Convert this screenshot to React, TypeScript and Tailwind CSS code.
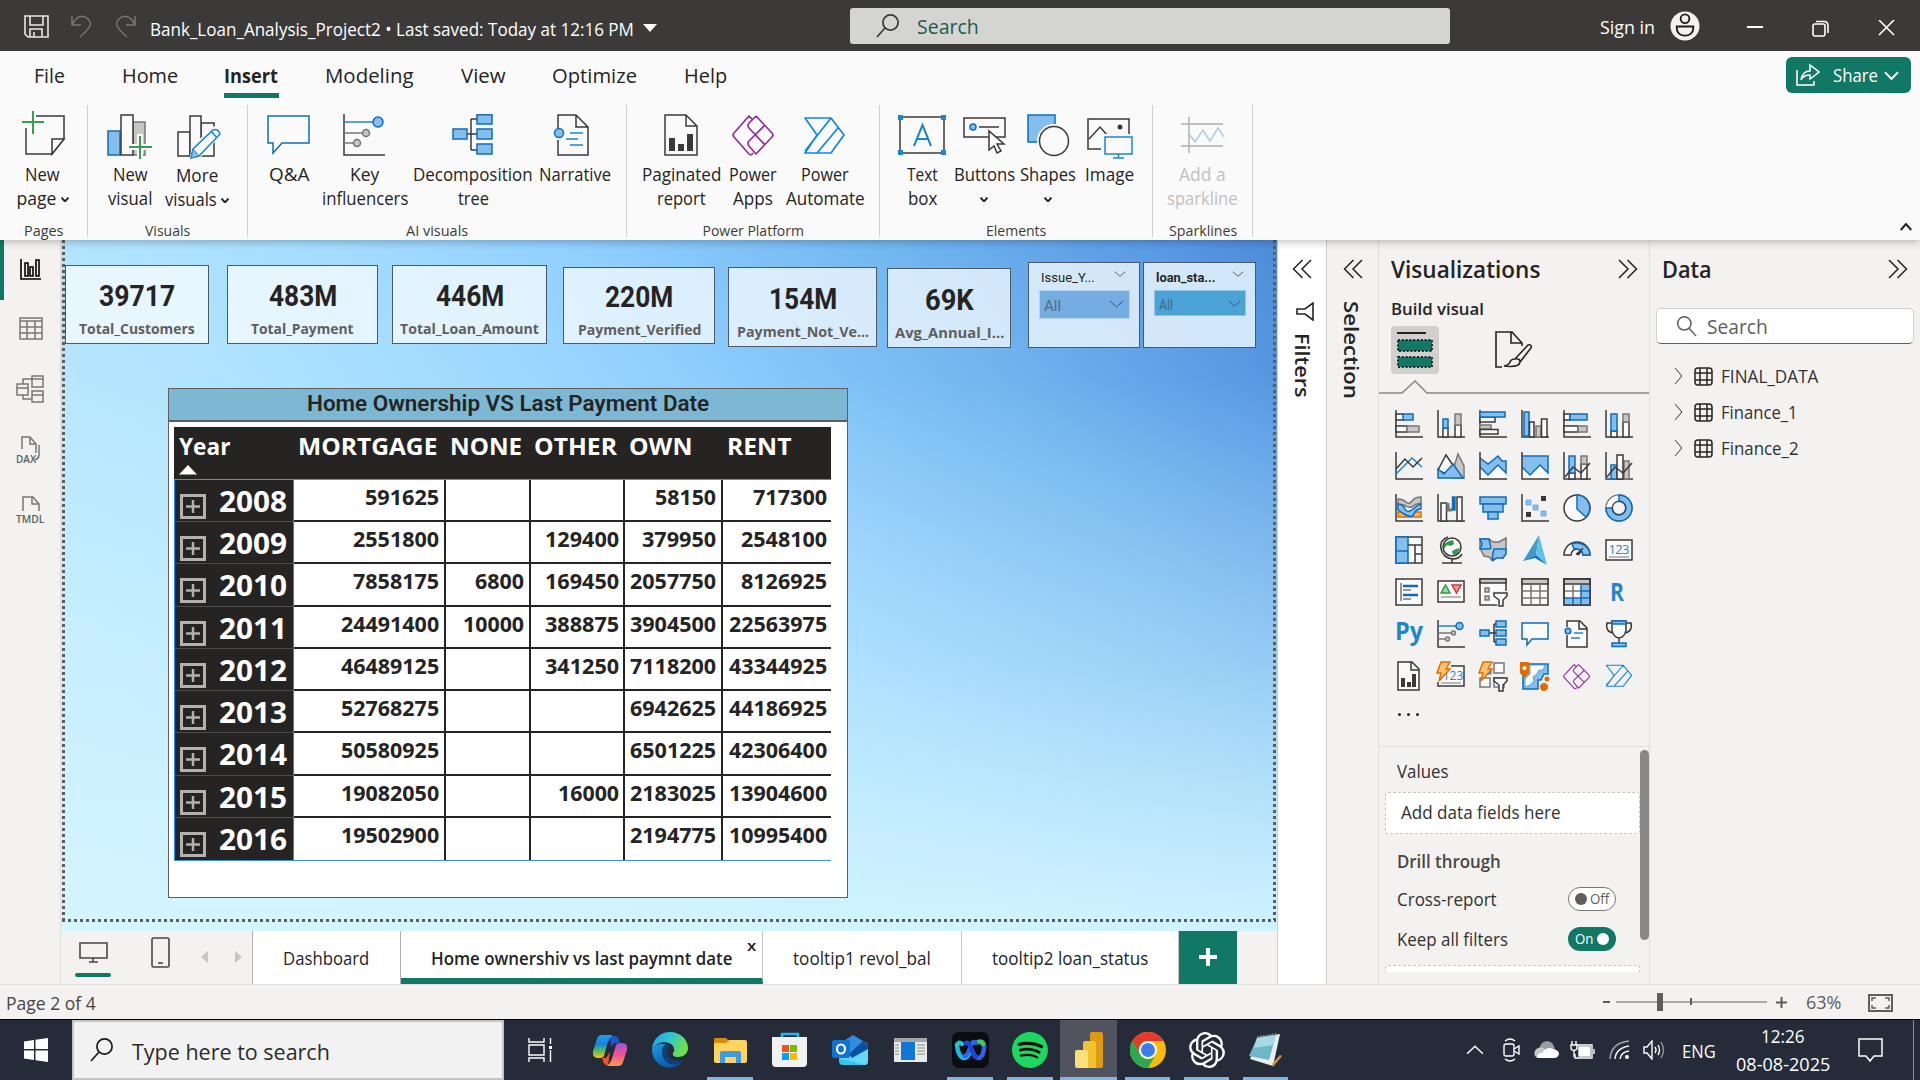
import { useLayoutEffect, useRef, type ReactNode } from "react";
import { SiOpenai, SiSpotify } from "react-icons/si";

/* Text squeezed or stretched horizontally to its designed width. */
function Fit({ w, children, className = "" }: { w: number; children: ReactNode; className?: string }) {
  const outer = useRef<HTMLSpanElement>(null);
  const inner = useRef<HTMLSpanElement>(null);
  useLayoutEffect(() => {
    if (!outer.current || !inner.current) return;
    outer.current.style.width = `${w}px`;
    inner.current.style.transform = `scaleX(${w / inner.current.offsetWidth})`;
  }, [w, children]);
  return (
    <span ref={outer} className={`inline-block shrink-0 text-left whitespace-nowrap ${className}`}>
      <span ref={inner} className="inline-block origin-left">{children}</span>
    </span>
  );
}

const DK = "#3b3a39";
const GY = "#797775";
const LG = "#c8c6c4";
const BL = "#0f6cbd";
const BF = "#83beec";
const WH = "#fafafa";

type BoxProps = { a: number; b: number; c: number; d: number; f?: string; s?: string; t?: number };
/* Rectangle from corner (a, b) to corner (c, d). */
const Bx = ({ a, b, c, d, f = WH, s = DK, t = 1.5 }: BoxProps) => (
  <rect x={a} y={b} width={c - a} height={d - b} fill={f} stroke={s} strokeWidth={t} />
);
const Ln = ({ d, s = DK, t = 1.5, f = "none" }: { d: string; s?: string; t?: number; f?: string }) => (
  <path d={d} fill={f} stroke={s} strokeWidth={t} />
);
const Axis = () => <Ln d="M1 0V27H28" />;

const Chev = ({ dir, className }: { dir: "down" | "up" | "right"; className: string }) => (
  <svg viewBox="0 0 16 16" className={className} fill="none" stroke="currentColor" preserveAspectRatio="none">
    <path vectorEffect="non-scaling-stroke" d={dir === "down" ? "M1 2 8 14 15 2" : dir === "up" ? "M1 14 8 2 15 14" : "M2 1 14 8 2 15"} />
  </svg>
);
const Double = ({ right = false }: { right?: boolean }) => (
  <svg width="20" height="20" viewBox="0 0 20 20" fill="none" stroke="#252423" strokeWidth="1.5" className="shrink-0">
    {right ? <path d="M1 1 10 10 1 19M9.500 1 18.500 10 9.500 19" /> : <path d="M19 1 10 10 19 19M10.500 1 1.500 10 10.500 19" />}
  </svg>
);
const Magnifier = ({ size, color, flip = false }: { size: number; color: string; flip?: boolean }) => (
  <svg width={size} height={size} viewBox="0 0 24 24" fill="none" stroke={color} strokeWidth="1.7" className={flip ? "-scale-x-100 shrink-0" : "shrink-0"}>
    <circle cx="9.500" cy="8.500" r="7.600" />
    <path d="M15 14 23 23" />
  </svg>
);

/* ---------- Title bar ---------- */
function TitleBar() {
  return (
    <header className="flex h-[51px] items-start bg-[#3b3a38] text-white">
      <svg className="mt-[15px] ml-6 shrink-0" width="25" height="24" fill="none" stroke="#e8e8e8" strokeWidth="1.600">
        <path d="M1 1H24V22H4L1 19ZM6 1V10H19V1M6 22V14H18V22M10 22V17" />
      </svg>
      <svg className="mt-[15px] ml-[22px] shrink-0" width="21" height="24" fill="none" stroke="#797775" strokeWidth="1.500">
        <path d="M1 1V10H10M1 10C5 1 12-1 17 4 22 9 19 13 9 22" />
      </svg>
      <svg className="mt-[15px] ml-[23px] shrink-0 -scale-x-100" width="21" height="24" fill="none" stroke="#797775" strokeWidth="1.500">
        <path d="M1 1V10H10M1 10C5 1 12-1 17 4 22 9 19 13 9 22" />
      </svg>
      <Fit w={484} className="mt-[14px] ml-[14px] text-[17.500px] leading-[30px]">Bank_Loan_Analysis_Project2 • Last saved: Today at 12:16 PM</Fit>
      <svg className="mt-6 ml-[9px] shrink-0" width="14" height="8"><path d="M0 0H14L7 8Z" fill="#fff" /></svg>
      <div className="mt-2 ml-[193px] flex h-9 w-[600px] shrink-0 items-center rounded-[3px] bg-[#d4d4d2] pl-[26px] text-[#1f5c4d]">
        <Magnifier size={24} color="#3b3a39" flip />
        <Fit w={62} className="mt-[2px] ml-[17px] text-[19.500px] leading-9">Search</Fit>
      </div>
      <Fit w={55} className="mt-3 ml-[150px] text-[17.500px] leading-[30px]">Sign in</Fit>
      <svg className="mt-[11px] ml-[15px] shrink-0" width="30" height="30" viewBox="0 0 31 31" fill="none" stroke="#1b1a19" strokeWidth="1.900">
        <circle cx="15.500" cy="15.500" r="15" fill="#f3f2f1" stroke="none" />
        <circle cx="15.500" cy="8" r="4.500" />
        <path d="M7 16H24V18C24 28 7 28 7 18Z" />
      </svg>
      <div className="mt-[26px] ml-[47px] h-[2px] w-4 bg-white" />
      <svg className="mt-5 ml-[49px] shrink-0" width="18" height="17" fill="none" stroke="#fff" strokeWidth="1.600">
        <rect x="1" y="4" width="12" height="12" rx="2" />
        <path d="M4 1.500H12Q16 1.500 16 6V13" />
      </svg>
      <svg className="mt-5 ml-[48px] shrink-0" width="17" height="16" fill="none" stroke="#fff" strokeWidth="1.600"><path d="M1 0 16 15M16 0 1 15" /></svg>
    </header>
  );
}

/* ---------- Menu ---------- */
function MenuBar() {
  return (
    <nav className="relative z-20 flex h-[54px] items-start bg-[#fafafa] text-[19.500px] leading-[50px] text-[#252423]">
      <Fit w={31} className="ml-[34px]">File</Fit>
      <Fit w={56} className="ml-[57px]">Home</Fit>
      <div className="ml-[46px] h-[47px] w-[55px] border-b-[5px] border-[#117865]">
        <Fit w={54} className="font-bold">Insert</Fit>
      </div>
      <Fit w={89} className="ml-[46px]">Modeling</Fit>
      <Fit w={45} className="ml-[47px]">View</Fit>
      <Fit w={85} className="ml-[46px]">Optimize</Fit>
      <Fit w={43} className="ml-[47px]">Help</Fit>
      <div className="mt-[6px] mr-[9px] ml-auto flex h-9 w-[125px] items-center rounded-md bg-[#117865] pl-[10px] text-white">
        <svg width="24" height="24" fill="none" stroke="#fff" strokeWidth="1.500">
          <path d="M1 7V22H18V18M5 17C6 11 9 8 14 8V2L23 9 14 16V12C10 12 7 13 5 17Z" />
        </svg>
        <Fit w={45} className="ml-[13px] text-[17.500px] leading-9">Share</Fit>
        <Chev dir="down" className="ml-[6px] h-[9px] w-[15px] stroke-2" />
      </div>
    </nav>
  );
}

/* ---------- Ribbon ---------- */
const Decomp = () => (
  <>
    <path d="M14 20H21M21 5V36M21 5H27M21 20H27M21 36H27" stroke={DK} strokeWidth="1.500" fill="none" />
    <Bx a={3} b={15} c={17} d={25} f={BF} s={BL} />
    <Bx a={27} b={0.8} c={42} d={10} f={BF} s={BL} />
    <Bx a={27} b={15} c={42} d={25} f={BF} s={BL} />
    <Bx a={27} b={30} c={42} d={40} f={BF} s={BL} />
  </>
);
const PowerAppsGlyph = () => (
  <g fill="none" stroke="#8f2f9c" strokeWidth="1.700" strokeLinejoin="round">
    <path d="M20 4 17 1 2 18Q0 20 2 22L17 39Q19 41 21 38M24 1 40 18Q42 20 40 22L24 39 17 31Q15 28 17 26L33 10M24 1 17 8Q15 11 17 13L33 30" />
  </g>
);
const AutomateGlyph = () => (
  <g fill="none" stroke="#1284e8" strokeWidth="1.700" strokeLinejoin="round">
    <path d="M2 2H28L41 19 28 37H2L14 19ZM28 2 2 35M35 12 14 37" />
  </g>
);

const icons: Record<string, ReactNode> = {
  page: (
    <><Ln d="M17 6H45V29L33 44H7V18" f={WH} /><Ln d="M45 29H33V44Z" f={WH} /><Ln d="M14 1V24M3 12H25" s="#399e50" t={2} /></>
  ),
  visual: (
    <><Bx a={2} b={21} c={14} d={45} f={BF} s={BL} /><Bx a={27} b={12} c={39} d={45} f={LG} s={GY} /><Bx a={15} b={5} c={27} d={45} />
      <path d="M34 24V50M22 37H47" stroke={WH} strokeWidth="6" /><Ln d="M34 26V49M23 37H46" s="#399e50" t={2} /></>
  ),
  more: (
    <><Bx a={5} b={22} c={17} d={46} /><Bx a={28} b={13} c={41} d={46} /><Bx a={17} b={6} c={28} d={46} />
      <path d="M18 48 21 36 41 18Q46 18 47 24L28 45Z" fill={WH} stroke={WH} strokeWidth="3" />
      <Ln d="M18 48 20 39 40 20Q45 18 47 24L26 46ZM38 21 44 28" s="#1a86cf" f={WH} /><path d="M18 48 20 39 26 46Z" fill={BF} stroke="#1a86cf" /></>
  ),
  qa: <Ln d="M3 6H44V33H17L8 43V33H3Z" s={BL} f={WH} />,
  key: (
    <><Ln d="M3 4V45H44" /><Ln d="M3 12H33" s="#1a86cf" /><circle cx="37" cy="12" r="5" fill={BF} stroke={BL} strokeWidth="1.5" />
      <Ln d="M3 23H22M3 33H13" s={GY} /><g fill={LG} stroke={GY} strokeWidth="1.5"><circle cx="25" cy="23" r="3.5" /><circle cx="16" cy="33" r="3.5" /></g></>
  ),
  decomp: <g transform="translate(1 4)"><Decomp /></g>,
  narrative: (
    <g transform="translate(1 0)"><Ln d="M6 18V5H24L36 17V45H6V30M24 5V17H36" f={WH} /><circle cx="7" cy="23" r="4.500" fill={BF} stroke={BL} strokeWidth="1.5" />
      <Ln d="M18 23H31M14 29H26M18 35H31" s="#1a86cf" /></g>
  ),
  paginated: (
    <><Ln d="M8 5H29L40 16V45H8ZM29 5V16H40" f={WH} /><path d="M12 28H18V41H12ZM21 34H27V41H21ZM30 24H36V41H30Z" fill={DK} /></>
  ),
  apps: <g transform="translate(3 5)"><PowerAppsGlyph /></g>,
  automate: <g transform="translate(2 6)"><AutomateGlyph /></g>,
  textbox: (
    <><Bx a={2} b={7} c={46} d={43} f="none" /><g fill="#1a86cf"><path d="M0 5H5V10H0ZM43 5H48V10H43ZM0 40H5V45H0ZM43 40H48V45H43Z" /></g>
      <Ln d="M16 36 24.500 15 33 36M19 29H30" s="#1a86cf" t={2} /></>
  ),
  buttons: (
    <><Bx a={4} b={8} c={45} d={27} /><circle cx="13" cy="17" r="3" fill={BF} stroke={BL} strokeWidth="1.500" /><Ln d="M19 17H39" />
      <path d="M29 21V40L34 36 37 43 41 41 37 34H44Z" fill={WH} stroke={DK} strokeWidth="1.500" /></>
  ),
  shapes: (
    <><Bx a={4} b={5} c={31} d={32} f={BF} s={BL} /><circle cx="30" cy="31" r="17" fill={WH} /><circle cx="30" cy="31" r="14.500" fill={WH} stroke={DK} strokeWidth="1.500" /></>
  ),
  image: (
    <><Bx a={3} b={9} c={44} d={39} /><Ln d="M4 29 15 17 23 26" /><circle cx="35" cy="17" r="2.500" fill={DK} />
      <rect x="16" y="24" width="34" height="22" fill={WH} /><Ln d="M20 27H47V44H20ZM33.500 44V48M28 48H39" s="#1a86cf" f={WH} /></>
  ),
  spark: (
    <><Ln d="M10 7V43M2 14H44M2 36H44" s="#b3b0ad" /><Ln d="M11 25 16 32 24 20 31 31 39 18 45 27" s="#a9cfe6" /></>
  ),
};

type ItemProps = { icon: string; w: string; lines: [string, number][]; chev?: boolean; muted?: boolean; drop?: string };
function Item({ icon, w, lines, chev, muted, drop = "" }: ItemProps) {
  return (
    <div className={`flex shrink-0 flex-col items-center pt-[5px] text-[17.500px] leading-6 ${muted ? "text-[#c2c0be]" : "text-[#252423]"} ${w}`}>
      <svg width="48" height="52" className="shrink-0 overflow-visible">{icons[icon]}</svg>
      <div className={`flex flex-col items-center ${drop}`}>
        {lines.map(([t, n], i) => (
          <div key={t} className="flex h-6 items-center">
            <Fit w={n}>{t}</Fit>
            {chev && i === 1 && <Chev dir="down" className="mt-[2px] ml-1 h-[5px] w-2 stroke-2" />}
          </div>
        ))}
        {chev && lines.length === 1 && <Chev dir="down" className="mt-[11px] h-[5px] w-2 stroke-2" />}
      </div>
    </div>
  );
}
function Group({ w, label, lw, children }: { w: string; label: string; lw: number; children: ReactNode }) {
  return (
    <div className={`flex h-[132px] shrink-0 flex-col border-r border-[#d2d0ce] ${w}`}>
      <div className="flex h-[117px] shrink-0">{children}</div>
      <div className="flex justify-center text-[14px] leading-[18px] text-[#3b3a39]"><Fit w={lw}>{label}</Fit></div>
    </div>
  );
}
function Ribbon() {
  return (
    <section className="relative z-10 flex h-[135px] bg-[#fafafa] shadow-[0_2px_8px_rgba(0,0,0,0.25)]">
      <Group w="w-[88px]" label="Pages" lw={39}>
        <Item icon="page" w="w-[85px]" lines={[["New", 35], ["page", 40]]} chev />
      </Group>
      <Group w="w-[160px]" label="Visuals" lw={45}>
        <Item icon="visual" w="ml-[16px] w-[52px]" lines={[["New", 35], ["visual", 44]]} />
        <Item icon="more" w="ml-[4px] w-[74px]" lines={[["More", 42], ["visuals", 52]]} chev drop="translate-y-px" />
      </Group>
      <Group w="w-[379px]" label="AI visuals" lw={62}>
        <Item icon="qa" w="ml-[16px] w-[50px]" lines={[["Q&A", 40]]} />
        <Item icon="key" w="ml-[7px] w-[87px]" lines={[["Key", 29], ["influencers", 86]]} />
        <Item icon="decomp" w="ml-[4px] w-[122px]" lines={[["Decomposition", 120], ["tree", 31]]} />
        <Item icon="narrative" w="ml-[4px] w-[74px]" lines={[["Narrative", 72]]} />
      </Group>
      <Group w="w-[253px]" label="Power Platform" lw={101}>
        <Item icon="paginated" w="ml-[14px] w-[80px]" lines={[["Paginated", 79], ["report", 49]]} />
        <Item icon="apps" w="ml-[7px] w-[50px]" lines={[["Power", 48], ["Apps", 40]]} />
        <Item icon="automate" w="ml-[7px] w-[80px]" lines={[["Power", 48], ["Automate", 79]]} />
      </Group>
      <Group w="w-[273px]" label="Elements" lw={60}>
        <Item icon="textbox" w="ml-[18px] w-[48px]" lines={[["Text", 31], ["box", 29]]} />
        <Item icon="buttons" w="ml-[8px] w-[60px]" lines={[["Buttons", 61]]} chev />
        <Item icon="shapes" w="ml-[5px] w-[58px]" lines={[["Shapes", 56]]} chev />
        <Item icon="image" w="ml-[7px] w-[50px]" lines={[["Image", 49]]} />
      </Group>
      <Group w="w-[100px]" label="Sparklines" lw={68}>
        <Item icon="spark" w="ml-[13px] w-[73px]" lines={[["Add a", 47], ["sparkline", 71]]} muted />
      </Group>
      <Chev dir="up" className="mt-[118px] mr-[8px] ml-auto h-2 w-3 stroke-2 text-[#252423]" />
    </section>
  );
}

/* ---------- Left view switcher ---------- */
function LeftNav() {
  return (
    <aside className="flex w-[61px] shrink-0 flex-col items-center border-r border-[#e1dfdd] bg-[#f3f2f1]">
      <div className="flex h-[60px] w-full items-center border-l-4 border-[#117865] pl-4">
        <svg width="21" height="21" className="-mt-[2px] overflow-visible"><path d="M1 0V20H21M5 4H8V17H5ZM10 8H13V17H10ZM16 1H19V17H16Z" fill="none" stroke="#000" strokeWidth="1.600" /></svg>
      </div>
      <svg className="mt-[17px] ml-[1px]" width="24" height="24" fill="none" stroke="#797775" strokeWidth="1.500"><path d="M1 1H23V22H1ZM1 4H23M1 10H23M1 16H23M8 4V22M16 4V22" /></svg>
      <svg className="mt-[34px]" width="29" height="28" fill="none" stroke="#797775" strokeWidth="1.500"><path d="M16 1H27V12H16ZM16 4H27M1 9H12V20H1ZM1 13H12M16 16H27V27H16ZM16 20H27M7 9V4H16M7 20V24H16" /></svg>
      <div className="mt-[33px] flex h-7 w-9 flex-col items-center">
        <svg width="28" height="16" className="shrink-0 -translate-x-[2px] overflow-visible" fill="none" stroke="#797775" strokeWidth="1.500"><path d="M8 13V1H16L22 8V17M16 1V8H22M25 9V16Q26 22 21 24" /></svg>
        <Fit w={20} className="mt-[1px] -ml-[9px] text-[11px] leading-3 font-semibold text-[#605e5c]">DAX</Fit>
      </div>
      <div className="mt-[32px] flex h-7 w-9 flex-col items-center">
        <svg width="28" height="16" className="shrink-0" fill="none" stroke="#797775" strokeWidth="1.500"><path d="M7 15V1H17L23 8V15M16 1V8H23" /></svg>
        <Fit w={28} className="mt-[1px] text-[11px] leading-3 font-semibold text-[#605e5c]">TMDL</Fit>
      </div>
    </aside>
  );
}

/* ---------- Report canvas ---------- */
const cards = [
  { pos: "left-[4px] top-[25px] w-[144px] h-[79px]", v: "39717", vw: 76, l: "Total_Customers", lw: 116, pad: "pt-[14px]" },
  { pos: "left-[166px] top-[25px] w-[151px] h-[79px]", v: "483M", vw: 68, l: "Total_Payment", lw: 103, pad: "pt-[14px]" },
  { pos: "left-[331px] top-[25px] w-[155px] h-[79px]", v: "446M", vw: 68, l: "Total_Loan_Amount", lw: 139, pad: "pt-[14px]" },
  { pos: "left-[502px] top-[27px] w-[152px] h-[77px]", v: "220M", vw: 68, l: "Payment_Verified", lw: 123, pad: "pt-[13px]" },
  { pos: "left-[667px] top-[27px] w-[149px] h-[80px]", v: "154M", vw: 68, l: "Payment_Not_Ve...", lw: 132, pad: "pt-[15px]" },
  { pos: "left-[826px] top-[28px] w-[124px] h-[80px]", v: "69K", vw: 49, l: "Avg_Annual_I...", lw: 109, pad: "pt-[15px]" },
];

const rows: [string, string, string, string, string, string][] = [
  ["2008", "591625", "", "", "58150", "717300"],
  ["2009", "2551800", "", "129400", "379950", "2548100"],
  ["2010", "7858175", "6800", "169450", "2057750", "8126925"],
  ["2011", "24491400", "10000", "388875", "3904500", "22563975"],
  ["2012", "46489125", "", "341250", "7118200", "43344925"],
  ["2013", "52768275", "", "", "6942625", "44186925"],
  ["2014", "50580925", "", "", "6501225", "42306400"],
  ["2015", "19082050", "", "16000", "2183025", "13904600"],
  ["2016", "19502900", "", "", "2194775", "10995400"],
];
const cellPad = ["pr-[5px]", "pr-[5px]", "pr-[4px]", "pr-[5px]", "pr-[4px]"];

function Matrix() {
  return (
    <div className="absolute top-[148px] left-[107px] flex h-[510px] w-[680px] flex-col border border-[#605e5c] bg-white">
      <div className="flex h-[33px] shrink-0 justify-center border-b-2 border-[#605e5c] bg-[#7cb8d4] font-['Roboto'] text-[21.500px] leading-[29px] font-semibold text-[#252423]">
        <Fit w={402}>Home Ownership VS Last Payment Date</Fit>
      </div>
      <div className="mt-[5px] ml-[5px] w-[657px] font-bold">
        <div className="grid h-[52px] grid-cols-[120px_152px_85px_94px_98px_108px] bg-[#252423] text-[23.500px] leading-[38px] text-white">
          <div className="pl-[5px]">
            <Fit w={51} className="h-[37px]">Year</Fit>
            <svg width="18" height="10" className="block"><path d="M0 9.500 9 0 18 9.500Z" fill="#fff" /></svg>
          </div>
          <div className="pl-[4px]"><Fit w={139}>MORTGAGE</Fit></div>
          <div className="pl-[4px]"><Fit w={72}>NONE</Fit></div>
          <div className="pl-[3px]"><Fit w={83}>OTHER</Fit></div>
          <div className="pl-[4px]"><Fit w={64}>OWN</Fit></div>
          <div className="pl-[4px]"><Fit w={64}>RENT</Fit></div>
        </div>
        <div className="grid h-[382px] grid-rows-9 border-y border-[#3a96f0]">
          {rows.map(([year, ...vals], r) => (
            <div key={year} className="grid min-h-0 grid-cols-[120px_152px_85px_94px_98px_108px]">
              <div className={`flex border-x border-[#118dff] bg-[#252423] pl-[5px] ${r < 8 ? "shadow-[inset_0_-1px_0_#4d4c4b]" : ""}`}>
                <svg width="26" height="25" className="mt-[14px] shrink-0"><path d="M1.500 1.500H24.500V23.500H1.500Z" fill="none" stroke="#b3b0ad" strokeWidth="3" /><path d="M6 12.500H20M13 6V19" stroke="#b3b0ad" strokeWidth="2.500" /></svg>
                <Fit w={68} className="ml-[13px] text-[28px] leading-[42px] text-white">{year}</Fit>
              </div>
              {vals.map((v, i) => (
                <div key={i} className={`flex justify-end text-[20.500px] leading-[34px] text-[#252423] ${cellPad[i]} ${i < 4 ? "border-r-2 border-r-[#252423]" : ""} ${r < 8 ? "border-b-2 border-b-[#252423]" : ""}`}>
                  {v && <Fit w={v.length * 12.3}>{v}</Fit>}
                </div>
              ))}
            </div>
          ))}
        </div>
      </div>
    </div>
  );
}

function Canvas() {
  return (
    <div className="relative h-[691px] w-[1216px] overflow-hidden bg-[linear-gradient(to_bottom,rgba(213,246,255,0)_20%,rgba(213,246,255,0.42)_62%,rgba(213,246,255,0.93)_100%),linear-gradient(55deg,#c4eeff_0%,#b4e5ff_28%,#a6deff_42%,#92d0ff_58%,#70b5ef_78%,#5a9be5_92%,#4c8cd8_100%)]">
      <div className="absolute top-0 left-[1px] h-[680px] w-[3px] bg-[repeating-linear-gradient(to_bottom,#605e5c_0_3px,transparent_3px_6px)]" />
      <div className="absolute top-0 left-[1212px] h-[680px] w-[3px] bg-[repeating-linear-gradient(to_bottom,#605e5c_0_3px,transparent_3px_6px)]" />
      <div className="absolute top-[679px] left-[1px] h-[3px] w-[1214px] bg-[repeating-linear-gradient(to_right,#605e5c_0_3px,transparent_3px_6px)]" />
      {cards.map((c) => (
        <div key={c.v} className={`absolute flex flex-col items-center border border-[#4d5a66] bg-white/70 ${c.pos} ${c.pad}`}>
          <Fit w={c.vw} className="font-['Roboto'] text-[29px] leading-8 font-bold text-[#252423]">{c.v}</Fit>
          <Fit w={c.lw} className="mt-[7px] text-[14.500px] leading-5 font-bold text-[#605e5c]">{c.l}</Fit>
        </div>
      ))}
      <div className="absolute top-[22px] left-[967px] h-[86px] w-[112px] border border-[#4d5a66] bg-[#d9ebfa]/95 pt-1 pl-[10px]">
        <div className="flex items-center">
          <Fit w={54} className="pl-[2px] font-['Roboto'] text-[13.500px] leading-5 text-[#252423]">Issue_Y...</Fit>
          <Chev dir="down" className="mb-[6px] ml-[21px] h-[6px] w-3 text-[#605e5c]" />
        </div>
        <div className="mt-[3px] flex h-[29px] w-[91px] items-center border border-[#b5d5ef] bg-[#74ade1] pl-1">
          <Fit w={17} className="mt-[3px] font-['Roboto'] text-[15px] leading-7 text-[#55697c]">All</Fit>
          <Chev dir="down" className="mb-[1px] ml-[48px] h-2 w-[15px] text-[#3f5468]" />
        </div>
      </div>
      <div className="absolute top-[22px] left-[1082px] h-[86px] w-[113px] border border-[#4d5a66] bg-[#d9ebfa]/95 pt-1 pl-[10px]">
        <div className="flex items-center">
          <Fit w={59} className="pl-[2px] font-['Roboto'] text-[13.500px] leading-5 font-bold text-[#252423]">loan_sta...</Fit>
          <Chev dir="down" className="mb-[6px] ml-[19px] h-[6px] w-3 text-[#605e5c]" />
        </div>
        <div className="mt-[3px] flex h-[26px] w-[92px] items-center border border-[#8fc6e8] bg-[#4ba2d6] pl-1">
          <Fit w={14} className="mt-[3px] font-['Roboto'] text-[14px] leading-6 text-[#3e6a8a]">All</Fit>
          <Chev dir="down" className="ml-[55px] h-[7px] w-[13px] text-[#345f80]" />
        </div>
      </div>
      <Matrix />
    </div>
  );
}

function PageTabs() {
  return (
    <div className="flex h-[53px] w-[1265px] bg-[#f3f2f1] text-[17.500px] leading-[55px] text-[#252423]">
      <div className="flex w-[52px] flex-col items-center pl-3">
        <svg width="30" height="28" className="mt-[11px] -ml-[1px] shrink-0" fill="none" stroke="#484644" strokeWidth="1.600"><path d="M2 1H29V16H2ZM15 16V20M11 20H20" /></svg>
        <div className="mt-[3px] h-1 w-9 rounded bg-[#117865]" />
      </div>
      <svg width="19" height="31" className="mt-[6px] ml-[38px]" fill="none" stroke="#484644" strokeWidth="1.600"><rect x="1" y="1" width="17" height="29" rx="1.500" /><path d="M7 26H12" /></svg>
      <svg width="7" height="12" className="mt-[20px] ml-[31px]"><path d="M7 0V12L0 6Z" fill="#c8c6c4" /></svg>
      <svg width="7" height="12" className="mt-[20px] ml-[27px]"><path d="M0 0V12L7 6Z" fill="#c8c6c4" /></svg>
      <div className="ml-[10px] flex w-[149px] justify-center border-x border-[#b3b0ad] bg-white pr-[2px]"><Fit w={86}>Dashboard</Fit></div>
      <div className="flex w-[362px] border-r border-b-[6px] border-r-[#c8c6c4] border-b-[#117865] bg-white pl-[30px] font-semibold">
        <Fit w={301} className="h-[46px]">Home ownershiv vs last paymnt date</Fit>
        <Fit w={9} className="ml-[15px] text-[15px] leading-[28px]">x</Fit>
      </div>
      <div className="flex w-[199px] justify-center border-r border-[#c8c6c4] bg-white"><Fit w={138}>tooltip1 revol_bal</Fit></div>
      <div className="flex w-[217px] justify-center border-r border-[#c8c6c4] bg-white"><Fit w={156}>tooltip2 loan_status</Fit></div>
      <div className="flex w-[58px] justify-center bg-[#117865] pt-[17px]">
        <svg width="18" height="18"><path d="M9 0V18M0 9H18" stroke="#fff" strokeWidth="4" /></svg>
      </div>
    </div>
  );
}

/* ---------- Visual gallery icons ---------- */
const Bolt = () => <path d="M4 0H13L9 7H13L2 19 4 11H0Z" fill="#ffc36b" stroke="#e06c00" strokeWidth="1.400" />;
const Funnel = ({ x, y }: { x: number; y: number }) => (
  <path transform={`translate(${x} ${y})`} d="M0 0H13V3L9 7V13H5V7L0 3Z" fill={WH} stroke={DK} strokeWidth="1.500" />
);
const gallery: ReactNode[] = [
  <><Axis /><Bx a={1} b={4} c={9} d={10} /><Bx a={8} b={4} c={18} d={10} f={BF} s={BL} /><Bx a={1} b={16} c={12} d={22} /><Bx a={12} b={16} c={24} d={22} f={LG} s={GY} /></>,
  <><Axis /><Bx a={6} b={18} c={11} d={27} /><Bx a={6} b={9} c={11} d={18} f={BF} s={BL} /><Bx a={18} b={15} c={24} d={27} /><Bx a={18} b={4} c={24} d={15} f={LG} s={GY} /></>,
  <><Axis /><Bx a={1} b={7} c={16} d={12} /><Bx a={1} b={2} c={26} d={7} f={BF} s={BL} /><Bx a={1} b={15} c={12} d={19} f={LG} s={GY} /><Bx a={1} b={19.500} c={19} d={24} /></>,
  <><Axis /><Bx a={3} b={2} c={8} d={26} f={BF} s={BL} /><Bx a={8.500} b={12} c={13} d={27} /><Bx a={15} b={16} c={20} d={27} f={LG} s={GY} /><Bx a={20.500} b={9} c={26} d={27} /></>,
  <><Axis /><Bx a={1} b={4} c={7} d={10} /><Bx a={7} b={4} c={24} d={10} f={BF} s={BL} /><Bx a={1} b={16} c={15} d={22} /><Bx a={15} b={16} c={24} d={22} f={LG} s={GY} /></>,
  <><Axis /><Bx a={6} b={21} c={12} d={27} /><Bx a={6} b={4} c={12} d={21} f={BF} s={BL} /><Bx a={18} b={12} c={24} d={27} /><Bx a={18} b={4} c={24} d={12} f={LG} s={GY} /></>,

  <><Axis /><Ln d="M1 22 17 6 27 15" s="#1a86cf" /><Ln d="M1 17 10 7 18 15 27 6" /></>,
  <><path d="M16 18 21 2 27 14V26H16Z" fill={LG} stroke={GY} strokeWidth="1.500" /><Ln d="M1 18 9 3 18 16 9 22Z" f={WH} /><Ln d="M1 17 7 22 16 12 26 26H1Z" s={BL} f={BF} /></>,
  <><path d="M1 15 9 23 19 14 27 21V27H1Z" fill={WH} /><Ln d="M1 6 9 12 19 4 23 9H27V21L19 13 9 23 1 15" s={BL} f={BF} /><Axis /></>,
  <><path d="M1 15 9 23 19 14 27 21V27H1Z" fill={WH} /><Ln d="M1 4H27V21L19 13 9 23 1 15" s={BL} f={BF} /><Axis /></>,
  <><Axis /><Bx a={6} b={21} c={12} d={27} /><Bx a={6} b={4} c={12} d={21} f={BF} s={BL} /><Bx a={18} b={12} c={24} d={27} /><Bx a={18} b={4} c={24} d={12} f={LG} s={GY} /><Ln d="M2 25 10 15 18 21 27 11" /></>,
  <><Axis /><Bx a={6} b={13} c={12} d={27} f={BF} s={BL} /><Bx a={19} b={9} c={24} d={27} f={LG} s={GY} /><Bx a={12} b={3} c={18} d={27} /><Ln d="M2 25 10 15 18 21 27 11" /></>,

  <><path d="M3 18H8L14 22 20 18H26V23H3Z" fill="#ffb45c" stroke="#e06c00" strokeWidth="1.500" /><path d="M3 5Q8 5 11 8T17 7 26 3V9Q20 10 17 13 12 14 9 11L3 11Z" fill={LG} stroke={GY} strokeWidth="1.500" /><path d="M3 10Q8 10 10 15T18 15 26 10V15Q21 15 19 20T9 20 3 15Z" fill={BF} stroke={BL} strokeWidth="1.500" /><Axis /></>,
  <><Axis /><Bx a={4} b={9} c={9.500} d={27} /><path d="M11 9V16H15" fill={LG} stroke={GY} strokeWidth="3" /><Bx a={15.500} b={3} c={18} d={16} f={BL} s={BL} /><Bx a={20} b={3} c={25} d={27} /></>,
  <><Bx a={1} b={3} c={27} d={10} f={BF} s={BL} /><Bx a={4} b={10} c={24} d={18} f={BF} s={BL} /><Bx a={9} b={18} c={19} d={25} f={BF} s={BL} /></>,
  <><Axis /><path d="M20 2H25V7H20ZM5 18H10V23H5Z" fill={DK} /><path d="M5 6H10V11H5ZM12 11H17V16H12ZM20 17H25V22H20Z" fill={BF} stroke="#5ca5dc" strokeWidth=".7" /></>,
  <><circle cx="14" cy="14" r="13" fill={WH} stroke={DK} strokeWidth="1.500" /><Ln d="M14 1A13 13 0 0 1 23 23L14 15Z" s={BL} f={BF} /></>,
  <><circle cx="14" cy="14" r="10" fill="none" stroke={GY} strokeWidth="7.500" /><circle cx="14" cy="14" r="10" fill="none" stroke={WH} strokeWidth="5" /><Ln d="M14 1A13 13 0 1 1 1 14H7A7 7 0 1 0 14 7Z" s={BL} f={BF} /><circle cx="14" cy="14" r="6.500" fill="none" stroke={DK} /></>,

  <><Bx a={1} b={1} c={27} d={27} /><path d="M1 1H13V27H1Z" fill={BF} stroke={BL} strokeWidth="1.500" /><Ln d="M1 15H13" s={BL} /><Ln d="M13 9H27M20 9V27M20 18H27" /></>,
  <><circle cx="15" cy="11" r="9" fill={WH} stroke={DK} strokeWidth="1.500" /><path d="M12 5 16 4 17 8 14 10 10 9 7 13 7 8ZM19 13 23 12 20 18 16 19 15 15Z" fill="#2f9a48" /><Ln d="M11 1Q2 4 4 13T16 23Q22 23 25 18M15 23V27M5 27H25" /></>,
  <><Ln d="M1 3H10L14 6H20L27 2V14L24 22 18 21 14 25 10 21 5 20 1 12Z" s={GY} f={LG} /><Ln d="M1 3H10L12 12 10 13H1L3 8Z" s={BL} f={BF} /><Ln d="M15 13H27V18L24 22 18 22 13 24 14 17Z" s={BL} f={BF} /></>,
  <><path d="M18-1 2 25 15 19Z" fill="#3f9bc5" /><path d="M18-1 15 19 26 29Z" fill="#5fc3e4" /><path d="M2 25 15 19 26 29 14 22Z" fill="#0a6fd0" /></>,
  <><Ln d="M1 19A13 13 0 0 1 27 19H20A6 6 0 0 0 8 19Z" f={WH} /><Ln d="M9 8A13 13 0 0 1 27 19H20A7 7 0 0 0 11 13Z" s={BL} f={BF} /><path d="M20 12 16 19 13 18Z" fill={DK} stroke={DK} /></>,
  <><Bx a={1} b={4} c={27} d={24} /><text x="14" y="18" textAnchor="middle" fontSize="13" fill="#1a86cf" textLength="21">123</text><Ln d="M4 21H24" s={GY} t={1} /></>,

  <><Bx a={1} b={1} c={27} d={27} /><Ln d="M6 5V23" s={GY} /><Ln d="M8 8H23M8 17H23" s={BL} t={2.500} /><Ln d="M8 12H16M8 21H16" s={GY} /></>,
  <><Bx a={1} b={3} c={27} d={24} /><path d="M4 15 8.500 7 13 15Z" fill="#9bd8a4" stroke="#2f9a48" strokeWidth="1.500" /><path d="M15 7H24L19.500 15Z" fill="#ff9ba0" stroke="#d13438" strokeWidth="1.500" /><Ln d="M4 19H24" s={GY} t={1} /></>,
  <><Bx a={1} b={1} c={27} d={27} /><Bx a={1} b={1} c={27} d={5} f={LG} /><Bx a={6} b={10} c={10} d={14} f={LG} s={GY} /><Bx a={6} b={18} c={10} d={22} f={LG} s={GY} /><path d="M12 13H29V29H19Z" fill="#f3f2f1" /><Funnel x={15} y={15} /></>,
  <><Bx a={1} b={1} c={27} d={27} /><Bx a={1} b={1} c={27} d={6} f={LG} /><Ln d="M1 13H27M1 20H27M10 6V27M19 6V27" s={GY} /></>,
  <><Bx a={1} b={1} c={27} d={27} /><path d="M18 6H27V27H1V20H18Z" fill={BF} /><Bx a={1} b={1} c={27} d={6} f={LG} /><Ln d="M1 13H18M10 6V20" s={GY} /><Ln d="M18 6V27M18 13H27M1 20H27M10 20V27" s={BL} /><Bx a={1} b={1} c={27} d={27} f="none" /></>,
  <text x="12" y="23" textAnchor="middle" fontSize="25" fontWeight="700" fill="#1f86c9" textLength="14" lengthAdjust="spacingAndGlyphs">R</text>,

  <text x="0" y="20" fontSize="25" fontWeight="700" fill="#1f86c9" textLength="28" lengthAdjust="spacingAndGlyphs">Py</text>,
  <><Axis /><Ln d="M1 6H19" s="#1a86cf" /><circle cx="22.500" cy="6" r="3.500" fill={BF} stroke={BL} strokeWidth="1.500" /><Ln d="M1 13H15M1 19H8" s={GY} /><g fill={LG} stroke={GY} strokeWidth="1.300"><circle cx="16.500" cy="13" r="2" /><circle cx="10.500" cy="19" r="2" /></g></>,
  <><Ln d="M9 13H17M15 4V22M15 4H18M15 22H18" /><Bx a={1} b={10} c={10} d={16} f={BF} s={BL} /><Bx a={17} b={1} c={27} d={7} f={BF} s={BL} /><Bx a={17} b={10} c={27} d={16} f={BF} s={BL} /><Bx a={17} b={19} c={27} d={25} f={BF} s={BL} /></>,
  <Ln d="M1 3H27V19H11L6 25V19H1Z" s={BL} f={WH} />,
  <><Ln d="M4 7V1H17L24 8V27H4V15M16 1V9H24" f={WH} /><circle cx="5" cy="11" r="2.800" fill={BF} stroke={BL} strokeWidth="1.500" /><Ln d="M11 13H20M8 18H17" s="#1a86cf" /></>,
  <><Ln d="M7 3H2Q0 12 9 13M21 3H26Q28 12 19 13" /><Ln d="M7 1H21V10Q20 17 14 18 8 17 7 10ZM14 18V23" f={WH} /><Bx a={7} b={1} c={21} d={4} f={BF} s={BL} /><Bx a={7} b={23} c={21} d={26.500} f={BF} s={BL} /></>,

  <><Ln d="M3 0H17L24 7V28H3ZM16 0V8H24" f={WH} /><path d="M6 16H10V25H6ZM12 20H16V25H12ZM17 12H21V25H17Z" fill={DK} /></>,
  <><Bx a={1} b={4} c={27} d={24} /><path d="M-1-1H14V8L4 20H-1Z" fill="#f3f2f1" /><text x="16" y="18" textAnchor="middle" fontSize="12" fill="#1a86cf">123</text><Ln d="M4 21H24" s={GY} t={1} /><Bolt /></>,
  <><Bx a={15} b={1} c={25} d={11} s={GY} /><Bx a={1} b={16} c={11} d={25} s={GY} /><Bx a={15} b={16} c={25} d={25} s={GY} /><path d="M8 11 12 7V12H8Z" fill={BF} stroke={BL} /><Bolt /><Funnel x={15} y={16} /></>,
  <>
    <path d="M2 2H27V12H23L20 18H17V27H2Z" fill={BF} stroke={BL} strokeWidth="1.500" />
    <path d="M9 3H24L22 8H18L16 12 12 15 13 19 9 23 4 25V17L9 12Z" fill={WH} stroke="#3d9bdc" strokeWidth=".8" />
    <path d="M-1 0H8V11L3.500 16-1 11Z" fill="#e06c00" /><circle cx="3.500" cy="6" r="2" fill="#fff" />
    <circle cx="26" cy="17" r="2.500" fill="#e06c00" /><circle cx="23" cy="25" r="4.500" fill="#e06c00" stroke="#f3f2f1" />
  </>,
  <g transform="translate(0 2) scale(.65 .62)"><PowerAppsGlyph /></g>,
  <g transform="translate(0 2) scale(.65 .6)"><AutomateGlyph /></g>,
];

/* ---------- Right-hand panes ---------- */
function CollapsedPanes() {
  return (
    <>
      <div className="flex w-[50px] shrink-0 flex-col items-center border-x border-[#d2d0ce] bg-white pt-[19px]">
        <Double />
        <svg width="18" height="19" className="mt-[23px] ml-[6px]" fill="none" stroke="#252423" strokeWidth="1.600"><path d="M17 1V18L9 12H1V7H9Z" /></svg>
        <Fit w={65} className="mt-[12px] ml-[36px] origin-top-left rotate-90 self-start text-[20px] leading-6 font-semibold text-[#252423]">Filters</Fit>
      </div>
      <div className="flex w-[52px] shrink-0 flex-col items-center border-r border-[#e1dfdd] pt-[19px]">
        <Double />
        <Fit w={98} className="mt-[22px] ml-[36px] origin-top-left rotate-90 self-start text-[20px] leading-6 font-semibold text-[#252423]">Selection</Fit>
      </div>
    </>
  );
}

function Toggle({ on }: { on: boolean }) {
  return on ? (
    <div className="flex h-6 w-12 items-center rounded-full bg-[#117865] pl-[7px] text-[14px] leading-6 text-white">
      <Fit w={18}>On</Fit>
      <span className="ml-1 h-3 w-3 rounded-full bg-white" />
    </div>
  ) : (
    <div className="flex h-6 w-12 items-center rounded-full border border-[#797775] bg-white pl-[6px] text-[14px] leading-6 text-[#605e5c]">
      <span className="mr-[3px] h-3 w-3 rounded-full bg-[#605e5c]" />
      <Fit w={19}>Off</Fit>
    </div>
  );
}

function Visualizations() {
  return (
    <section className="flex w-[271px] shrink-0 flex-col border-r border-[#e1dfdd]">
      <div className="flex h-[58px] items-center pl-3 text-[23px] font-semibold text-[#252423]">
        <Fit w={149} className="leading-[58px]">Visualizations</Fit>
        <span className="ml-[78px]"><Double right /></span>
      </div>
      <Fit w={93} className="-mt-[1px] ml-3 text-[17px] leading-6 font-semibold text-[#252423]">Build visual</Fit>
      <div className="mt-[5px] flex pl-3">
        <svg width="48" height="48" className="shrink-0">
          <rect width="48" height="48" rx="4" fill="#d2d0ce" />
          <path d="M6 7H35" stroke="#252423" strokeWidth="2" />
          <path d="M7 14H41V25H7ZM7 31H41V41H7Z" fill="#117865" stroke="#252423" strokeWidth="2" strokeDasharray="2 1.800" />
        </svg>
        <svg width="38" height="38" className="mt-[5px] ml-[56px]" fill="none" stroke="#252423" strokeWidth="1.600">
          <path d="M7 36H1V1H17L27 12V15M16 1V12H27" />
          <path d="M20 28 33 14Q37 13 36 17L25 31M20 28Q25 27 25 31 24 37 9 35 14 34 15 31 16 28 20 28Z" />
        </svg>
      </div>
      <svg width="270" height="15" className="mt-[6px] shrink-0" fill="none" stroke="#8a8886" strokeWidth="1.500"><path d="M0 13H23L36 1 48 13H270" /></svg>
      <div className="mt-[15px] grid h-[294px] grid-cols-[repeat(6,42px)] grid-rows-7 pl-4">
        {gallery.map((g, i) => (
          <svg key={i} width="28" height="28" className="overflow-visible">{g}</svg>
        ))}
      </div>
      <div className="mt-[8px] flex h-[5px] items-center gap-[6px] pl-[19px]">
        <i className="h-[3px] w-[3px] rounded-full bg-[#252423]" /><i className="h-[3px] w-[3px] rounded-full bg-[#252423]" /><i className="h-[3px] w-[3px] rounded-full bg-[#252423]" />
      </div>
      <div className="mt-[29px] flex border-t border-[#e1dfdd]">
        <div className="flex w-[261px] flex-col pl-[6px] text-[17.500px] leading-6 text-[#323130]">
          <Fit w={51} className="mt-[12px] ml-3">Values</Fit>
          <div className="mt-[9px] flex h-[42px] items-center rounded-[3px] border border-dashed border-[#c8c6c4] bg-white pb-[2px] pl-[15px]"><Fit w={160}>Add data fields here</Fit></div>
          <Fit w={104} className="mt-[15px] ml-3 font-semibold text-[#484644]">Drill through</Fit>
          <div className="mt-[14px] flex h-6 items-center justify-between pr-6 pl-3"><Fit w={100}>Cross-report</Fit><Toggle on={false} /></div>
          <div className="mt-4 flex h-6 items-center justify-between pr-6 pl-3"><Fit w={111}>Keep all filters</Fit><Toggle on /></div>
          <div className="mt-[14px] h-[7px] rounded-t-[3px] border border-b-0 border-dashed border-[#c8c6c4] bg-white" />
        </div>
        <div className="mt-[3px] h-[190px] w-[9px] rounded-full bg-[#8a8886]" />
      </div>
    </section>
  );
}

function DataPane() {
  return (
    <section className="flex w-[269px] flex-col">
      <div className="flex h-[58px] items-center pl-[12px] text-[23px] font-semibold text-[#252423]">
        <Fit w={50} className="leading-[58px]">Data</Fit>
        <span className="ml-[176px]"><Double right /></span>
      </div>
      <div className="mt-[10px] ml-[6px] flex h-9 w-[258px] items-center rounded-[5px] border border-[#d2d0ce] border-b-[#605e5c] bg-white pl-[19px] text-[19.500px] leading-9 text-[#605e5c]">
        <Magnifier size={21} color="#605e5c" />
        <Fit w={61} className="mt-[2px] ml-[10px]">Search</Fit>
      </div>
      <div className="mt-[14px] flex flex-col">
        {([["FINAL_DATA", 97], ["Finance_1", 77], ["Finance_2", 78]] as [string, number][]).map(([name, w]) => (
          <div key={name} className="flex h-9 items-center pl-6 text-[17.500px] text-[#323130]">
            <Chev dir="right" className="h-[18px] w-[9px]" />
            <svg width="19" height="19" className="ml-[11px]" fill="none" stroke="#252423" strokeWidth="1.500"><rect x="1" y="1" width="17" height="17" rx="3" /><path d="M1 6H18M1 13H18M6 1V18M13 1V18" /></svg>
            <Fit w={w} className="ml-[8px] leading-9">{name}</Fit>
          </div>
        ))}
      </div>
    </section>
  );
}

function StatusBar() {
  return (
    <footer className="flex h-9 items-center border-t border-b border-t-[#e1dfdd] border-b-black bg-[#f3f2f1] text-[17.500px] leading-9 text-[#484644]">
      <Fit w={90} className="mt-[2px] ml-[6px]">Page 2 of 4</Fit>
      <div className="ml-auto h-[2px] w-[7px] bg-[#605e5c]" />
      <svg width="151" height="18" className="ml-[6px]"><path d="M0 9H151" stroke="#605e5c" strokeWidth="1.200" /><path d="M41 0H47V18H41ZM74 5H76V12H74Z" fill="#605e5c" /></svg>
      <svg width="13" height="13" className="ml-[8px]"><path d="M6.500 1V12M1 6.500H12" stroke="#605e5c" strokeWidth="2" /></svg>
      <Fit w={35} className="ml-[18px] text-[#605e5c]">63%</Fit>
      <svg width="25" height="18" className="mt-[1px] mr-[27px] ml-[27px]" fill="none" stroke="#605e5c" strokeWidth="2"><path d="M1 1H24V17H1Z" /><path d="M4 7V4H8M17 4H21V7M21 11V14H17M8 14H4V11" strokeWidth="1.500" /></svg>
    </footer>
  );
}

/* ---------- Windows taskbar ---------- */
const Copilot = () => (
  <svg width="34" height="31" viewBox="0 0 34 31">
    <defs>
      <linearGradient id="cpa" x1="0" y1="0" x2="0" y2="1"><stop offset="0" stopColor="#1fa2e8" /><stop offset=".4" stopColor="#1683e0" /><stop offset=".65" stopColor="#49b96a" /><stop offset="1" stopColor="#f4c40f" /></linearGradient>
      <linearGradient id="cpb" x1="0" y1="0" x2="0" y2="1"><stop offset="0" stopColor="#a050e0" /><stop offset=".5" stopColor="#ee5290" /><stop offset="1" stopColor="#ff9a4d" /></linearGradient>
    </defs>
    <path d="M17 1H22Q25 1 26 5L27 8H24Q20 8 18 12Z" fill="#1b55c8" />
    <path d="M9 23H13L17 17 15 30H14Q11 30 10 26Z" fill="#f0532d" />
    <path d="M9 0H20Q16 3 14 10L11 21Q10 23 6 23H4Q-1 22 0 16L4 4Q5 0 9 0Z" fill="url(#cpa)" />
    <path d="M25 31H14Q18 28 20 20L23 10Q24 8 28 8H29Q35 8 34 15L30 27Q29 31 25 31Z" fill="url(#cpb)" />
  </svg>
);
const Edge = () => (
  <svg width="36" height="36" viewBox="0 0 36 36">
    <defs>
      <linearGradient id="eg1" x1="0" y1="0" x2="1" y2=".4"><stop offset="0" stopColor="#1f9fe0" /><stop offset=".5" stopColor="#30c3d2" /><stop offset="1" stopColor="#6fe04a" /></linearGradient>
      <linearGradient id="eg2" x1="0" y1="0" x2=".6" y2="1"><stop offset="0" stopColor="#1b9de2" /><stop offset="1" stopColor="#0b56a8" /></linearGradient>
    </defs>
    <path d="M0 17C1 6 9 0 18 0 29 0 36 8 36 16 36 22 31 25 26 25 22 25 20 23 21 21 23 19 23 15 19 12 12 8 4 11 0 17Z" fill="url(#eg1)" />
    <path d="M0 17C3 12 9 11 14 12 10 14 9 20 12 26 15 33 24 34 30 30 24 37 12 38 5 30 1 26 0 22 0 17Z" fill="url(#eg2)" />
    <path d="M14 12C9 16 9 22 12 27 16 33 26 34 33 27 27 30 20 29 17 25 14 21 15 18 18 15Z" fill="#123e78" />
  </svg>
);
const Explorer = () => (
  <svg width="33" height="27"><path d="M0 2Q0 1 2 1H12L15 4V9H0Z" fill="#d98e00" /><path d="M0 6H12L15 3H31Q33 3 33 5V24Q33 26 31 26H2Q0 26 0 24Z" fill="#ffd35c" /><path d="M6 26V16Q6 14 8 14H25Q27 14 27 16V26H22V20H11V26Z" fill="#3d9be0" /></svg>
);
const Store = () => (
  <svg width="36" height="36"><path d="M10 7V2H26V7" fill="none" stroke="#29b6ea" strokeWidth="2.500" /><path d="M0 5H35V31Q35 35 31 35H4Q0 35 0 31Z" fill="#f1f1f1" /><path d="M10 13H17V20H10Z" fill="#f25022" /><path d="M18 13H25V20H18Z" fill="#7fba00" /><path d="M10 21H17V28H10Z" fill="#00a4ef" /><path d="M18 21H25V28H18Z" fill="#ffb900" /></svg>
);
const Outlook = () => (
  <svg width="37" height="32"><path d="M7 10 21 1 36 10V15L20 22H7Z" fill="#2e8de0" /><path d="M36 12V27Q36 31 32 31H11Q7 31 7 27V22Z" fill="#35c3f1" /><path d="M7 24 36 14V27Q36 31 32 31Z" fill="#64d9f7" /><path d="M17 20 31 7 36 11V15L20 24Z" fill="#0b4fa0" /><rect x="0" y="6" width="18" height="18" rx="2" fill="#1172cf" /><ellipse cx="9" cy="15" rx="4" ry="4.500" fill="none" stroke="#fff" strokeWidth="2.200" /></svg>
);
const NewsApp = () => (
  <svg width="33" height="24"><path d="M0 0H33V24H0Z" fill="#e9e9e9" /><path d="M0 0H33V4H0Z" fill="#a5a5a5" /><path d="M7 4H21V22H7Z" fill="#0f78d4" /><path d="M1 7H5M1 10H5M1 13H5M1 16H5M23 7H31M23 10H31M23 13H31M23 16H31" stroke="#8a8a8a" /></svg>
);
const Webex = () => (
  <svg width="37" height="36">
    <rect width="37" height="36" rx="7" fill="#0b0c0e" />
    <g fill="none" strokeWidth="4.500" strokeLinecap="round">
      <path d="M27 10Q33 9 32 16 31 26 26 26 22 25 20 18" stroke="#2a63ef" />
      <path d="M26 10Q30 9 31 12" stroke="#39d060" />
      <path d="M5 13Q6 24 11 26 16 27 18 18" stroke="#1fb6e8" />
      <path d="M5 13Q7 9 10 12" stroke="#26c0c8" />
      <path d="M13 24Q16 23 18 16 20 8 24 11" stroke="#2a63ef" />
      <path d="M14 11Q17 10 19 16T24 25" stroke="#1b48d0" />
    </g>
  </svg>
);
const PowerBI = () => (
  <svg width="28" height="36"><path d="M15 2Q15 0 17 0H26Q28 0 28 2V34Q28 36 26 36H15Z" fill="#dd9a12" /><path d="M8 11Q8 9 10 9H19Q21 9 21 11V36H8Z" fill="#f2c230" /><path d="M0 20Q0 18 2 18H11Q13 18 13 20V36H2Q0 36 0 34Z" fill="#f9e07c" /></svg>
);
const Chrome = () => (
  <svg width="36" height="36"><circle cx="18" cy="18" r="18" fill="#fbbc05" /><path d="M2.400 9A18 18 0 0 1 33.600 9H18A9 9 0 0 0 10 22.500Z" fill="#e33b2e" /><path d="M2.400 9A18 18 0 0 0 18 36L25.800 22.500A9 9 0 0 1 10.200 22.500Z" fill="#2da94f" /><circle cx="18" cy="18" r="9" fill="#fff" /><circle cx="18" cy="18" r="7" fill="#3b7ded" /></svg>
);
const Notepad = () => (
  <svg width="33" height="34"><path d="M10 4 31 1 24 33 1 26Z" fill="#e8eef0" /><path d="M8 5 27 2 20 27 0 23Z" fill="#6db7c9" /><path d="M8 5 27 2 24 12 5 15Z" fill="#a6dbe6" /><path d="M8 4 28 1" stroke="#8a8a8a" strokeWidth="2" strokeDasharray="1.500 1.500" /><path d="M31 22 33 23 24 34 23 31Z" fill="#c99b45" /></svg>
);

const apps: { k: string; box: string; el: ReactNode; on?: boolean }[] = [
  { k: "copilot", box: "ml-[35px] w-[46px]", el: <Copilot /> },
  { k: "edge", box: "ml-[14px] w-[46px]", el: <Edge /> },
  { k: "explorer", box: "ml-[14px] w-[46px]", el: <Explorer />, on: true },
  { k: "store", box: "ml-[14px] w-[46px]", el: <Store /> },
  { k: "outlook", box: "ml-[14px] w-[46px]", el: <Outlook /> },
  { k: "news", box: "ml-[14px] w-[46px]", el: <NewsApp /> },
  { k: "webex", box: "ml-[14px] w-[46px]", el: <Webex />, on: true },
  { k: "spotify", box: "ml-[14px] w-[46px]", el: <span className="rounded-full bg-[#121212]"><SiSpotify size={36} color="#1ed760" /></span>, on: true },
  { k: "powerbi", box: "ml-[7px] w-[57px] bg-[#51545f]", el: <PowerBI />, on: true },
  { k: "chrome", box: "ml-[8px] w-[45px]", el: <Chrome />, on: true },
  { k: "openai", box: "ml-[14px] w-[45px]", el: <SiOpenai size={36} color="#fff" />, on: true },
  { k: "notepad", box: "ml-[14px] w-[45px]", el: <Notepad />, on: true },
];

function Taskbar() {
  return (
    <div className="flex h-[60px] items-center bg-[#252b38] text-white">
      <svg width="24" height="24" className="ml-6 shrink-0" fill="#fff"><path d="M0 3.500 10 2V11H0ZM11.500 1.800 24 0V11H11.500ZM0 12.500H10V22L0 20.500ZM11.500 12.500H24V24L11.500 22.200Z" /></svg>
      <div className="ml-6 flex h-[60px] w-[432px] shrink-0 items-center border-2 border-[#c4c4c4] bg-[#f2f2f2] pl-4">
        <Magnifier size={24} color="#1b1a19" flip />
        <Fit w={198} className="mt-[3px] ml-[18px] text-[21.500px] leading-8 text-[#2b2b2b]">Type here to search</Fit>
      </div>
      <svg width="24" height="24" className="ml-6 shrink-0" fill="none" stroke="#fff" strokeWidth="1.400"><path d="M1 0V4H16V0M1 7H16V17H1ZM1 24V20H16V24M22.500 0V6M22.500 12V24" /><path d="M21 8H24V11H21Z" fill="#fff" stroke="none" /></svg>
      {apps.map((a) => (
        <div key={a.k} className={`flex h-[60px] shrink-0 items-center justify-center border-b-[3px] pt-[3px] ${a.on ? "border-[#76b9ed]" : "border-transparent"} ${a.box}`}>{a.el}</div>
      ))}
      <Chev dir="up" className="ml-auto h-[10px] w-[18px] stroke-[1.5]" />
      <svg width="20" height="24" className="ml-[18px] shrink-0" fill="none" stroke="#fff" strokeWidth="1.400"><rect x="2" y="6" width="10" height="12" rx="2" /><path d="M12 11 17 8V16L12 13M3 3Q8-1 13 3M3 21Q8 25 13 21" /></svg>
      <svg width="25" height="18" className="ml-[12px] shrink-0"><path d="M5 10Q6 0 13 0T21 10Z" fill="#9a9ca4" /><path d="M3 17Q-1 14 1 10 3 5 10 7L20 17Z" fill="#c6c7cb" /><path d="M4 17Q2 12 8 12 13 5 19 8 25 9 25 13 24 17 20 17Z" fill="#fff" /></svg>
      <svg width="25" height="19" className="ml-[11px] shrink-0" fill="none" stroke="#fff" strokeWidth="1.400"><path d="M7 4H22V17H5V13" /><path d="M9 6H20V15H9Z" fill="#fff" /><path d="M24 8V13M2 0V4M6 0V4M1 4H7V8Q4 11 1 8ZM4 10V16" /></svg>
      <svg width="21" height="20" className="ml-[14px] shrink-0" fill="none" stroke="#fff" strokeWidth="1.400"><path d="M1 19Q2 3 20 1" opacity=".6" /><path d="M6 19Q7 8 20 6M11 19Q12 12 20 11" /><circle cx="18" cy="17" r="2" fill="#fff" stroke="none" /></svg>
      <svg width="23" height="20" className="ml-[13px] shrink-0" fill="none" stroke="#fff" strokeWidth="1.400"><path d="M1 7H4L9 1V19L4 13H1ZM12 7Q14 10 12 13M15 5Q18 10 15 15" /><path d="M18 2Q23 10 18 18" opacity=".5" /></svg>
      <Fit w={34} className="mt-[2px] ml-[16px] text-[17.500px] leading-6">ENG</Fit>
      <div className="ml-[20px] flex w-[94px] flex-col items-center text-[17.500px]">
        <Fit w={44} className="leading-7">12:26</Fit>
        <Fit w={94} className="leading-7">08-08-2025</Fit>
      </div>
      <svg width="25" height="25" className="ml-[28px] shrink-0" fill="none" stroke="#fff" strokeWidth="1.500"><path d="M1 1H24V18H16L12 23 8 18H1Z" /></svg>
      <div className="mr-[6px] ml-[30px] h-full w-px bg-[#8b8e97]" />
    </div>
  );
}

export default function App() {
  return (
    <div className="flex h-[1080px] w-[1920px] flex-col overflow-hidden bg-[#f3f2f1] font-['Open_Sans',sans-serif]">
      <TitleBar />
      <MenuBar />
      <Ribbon />
      <main className="flex h-[744px]">
        <LeftNav />
        <div className="flex w-[1216px] shrink-0 flex-col overflow-hidden"><Canvas /><PageTabs /></div>
        <CollapsedPanes />
        <Visualizations />
        <DataPane />
      </main>
      <StatusBar />
      <Taskbar />
    </div>
  );
}
